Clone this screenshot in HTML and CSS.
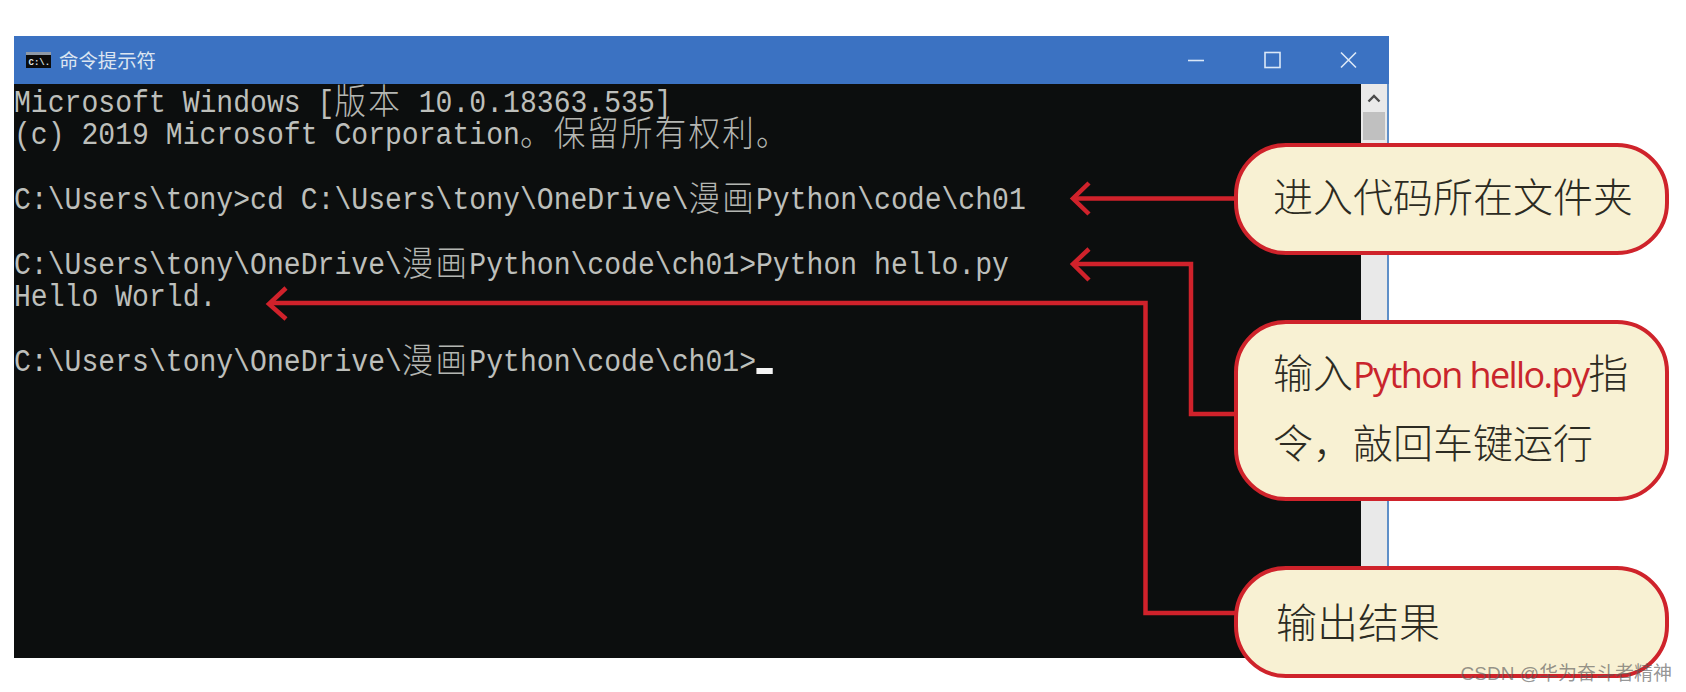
FILE: index.html
```html
<!DOCTYPE html>
<html lang="zh-CN">
<head>
<meta charset="utf-8">
<title>命令提示符</title>
<link rel="stylesheet" href="styles.css">
</head>
<body>
<div class="stage">
  <div class="window">
    <header class="titlebar">
      <svg class="app-icon" width="25" height="16" viewBox="0 0 25 16">
        <rect width="25" height="16" fill="#0b0b0b"/>
        <rect x="0" y="0" width="25" height="3" fill="#8f99a6"/>
        <text x="2.5" y="13" class="app-icon-text">C:\.</text>
      </svg>
      <span class="title">命令提示符</span>
      <div class="controls">
        <svg class="ctl" width="18" height="18" viewBox="0 0 18 18"><path d="M1 9.500H17" /></svg>
        <svg class="ctl" width="18" height="18" viewBox="0 0 18 18"><rect x="2" y="1.500" width="15" height="15"/></svg>
        <svg class="ctl" width="18" height="18" viewBox="0 0 18 18"><path d="M2 1.500L17 16.500M17 1.500L2 16.500"/></svg>
      </div>
    </header>
    <div class="content">
      <div class="console">
        <div class="line">Microsoft Windows [<span class="cjk">版本</span> 10.0.18363.535]</div>
        <div class="line">(c) 2019 Microsoft Corporation<span class="cjk">。保留所有权利。</span></div>
        <div class="line">&nbsp;</div>
        <div class="line">C:\Users\tony&gt;cd C:\Users\tony\OneDrive\<span class="cjk">漫画</span>Python\code\ch01</div>
        <div class="line">&nbsp;</div>
        <div class="line">C:\Users\tony\OneDrive\<span class="cjk">漫画</span>Python\code\ch01&gt;Python hello.py</div>
        <div class="line">Hello World.</div>
        <div class="line">&nbsp;</div>
        <div class="line">C:\Users\tony\OneDrive\<span class="cjk">漫画</span>Python\code\ch01&gt;<span class="cursor"></span></div>
      </div>
      <aside class="scrollbar">
        <div class="scroll-up">
          <svg width="14" height="9" viewBox="0 0 14 9"><path d="M1.500 7.500L7 2L12.500 7.500"/></svg>
        </div>
        <div class="scroll-thumb"></div>
      </aside>
    </div>
  </div>

  <svg class="arrows" width="1686" height="692" viewBox="0 0 1686 692">
    <path d="M1240 198.500H1074"/>
    <path d="M1089 183L1073 198.500L1089 214"/>
    <path d="M1240 414H1191V264H1074"/>
    <path d="M1089 249L1073 264L1089 280"/>
    <path d="M1240 613H1145.500V303H270"/>
    <path d="M286 288L269 304L286 319"/>
  </svg>

  <div class="callout callout-one"><p>进入代码所在文件夹</p></div>
  <div class="callout callout-two"><p>输入<span class="cmd">Python hello.py</span>指令，敲回车键运行</p></div>
  <div class="callout callout-three"><p>输出结果</p></div>
  <div class="watermark">CSDN @华为奋斗者精神</div>
</div>
</body>
</html>
```
FILE: styles.css
```css
html, body {
  margin: 0;
  padding: 0;
  background: #fff;
  overflow: hidden;
}

.stage {
  position: relative;
  box-sizing: border-box;
  width: 1686px;
  height: 692px;
  padding: 36px 0 0 14px;
  font-family: "Noto Sans CJK SC", sans-serif;
}

.window {
  display: flex;
  flex-direction: column;
  width: 1375px;
  height: 622px;
}

.titlebar {
  display: flex;
  align-items: center;
  flex: 0 0 48px;
  padding-left: 12px;
  background: #3b72c2;
}

.app-icon { flex: none; }

.app-icon-text {
  font-family: "Liberation Mono", monospace;
  font-size: 9px;
  font-weight: 700;
  fill: #dfe3e6;
}

.title {
  margin-left: 8px;
  font-size: 19.400px;
  color: #dbe5f1;
  line-height: 1;
}

.controls {
  display: flex;
  gap: 58px;
  margin-left: auto;
  margin-right: 32px;
}

.ctl {
  fill: none;
  stroke: #dbe8f7;
  stroke-width: 1.600;
}

.content {
  display: flex;
  flex: 1;
  min-height: 0;
}

.console {
  flex: 1;
  padding-top: 4px;
  overflow: hidden;
  background: #0c0e0e;
  color: #bdbfbb;
  font-family: "Liberation Mono", monospace;
  font-size: 31px;
}

.line {
  height: 32.400px;
  line-height: 32.400px;
  white-space: pre;
  transform: scaleX(0.9065);
  transform-origin: left center;
}

.cjk {
  font-family: "Noto Sans CJK SC", sans-serif;
  font-size: 34.800px;
  letter-spacing: 2.400px;
  font-weight: 300;
  color: #b4b6b2;
  line-height: 0;
  vertical-align: -2px;
}

.cursor {
  display: inline-block;
  width: 18.600px;
  height: 6px;
  background: #f4f4f4;
  vertical-align: -3px;
}

.scrollbar {
  flex: 0 0 26px;
  background: #e9e9e9;
  border-right: 2px solid #5f8fc8;
}

.scroll-up {
  display: flex;
  align-items: center;
  justify-content: center;
  height: 28px;
}

.scroll-up svg {
  fill: none;
  stroke: #4a4a4a;
  stroke-width: 2.400;
}

.scroll-thumb {
  height: 28px;
  margin: 0 2px;
  background: #c0c0c0;
}

.arrows {
  position: absolute;
  left: 0;
  top: 0;
  fill: none;
  stroke: #d0222b;
  stroke-width: 4.500;
}

.callout {
  position: absolute;
  left: 1234px;
  width: 435px;
  box-sizing: border-box;
  display: flex;
  align-items: center;
  padding-left: 35px;
  padding-right: 16px;
  background: #f8f1d3;
  border: 4.500px solid #cf232b;
  border-radius: 52px;
  color: #2c2b22;
  font-size: 40px;
  font-weight: 300;
}

.callout p { margin: 0; }

.callout-one {
  top: 143px;
  height: 112px;
  padding-bottom: 8px;
}

.callout-two {
  top: 320px;
  height: 181px;
  line-height: 67px;
  padding-bottom: 8px;
}

.callout-three {
  top: 566px;
  height: 112px;
  padding-left: 38px;
  padding-bottom: 5px;
  font-size: 41px;
}

.cmd {
  font-family: "Open Sans", sans-serif;
  font-size: 36px;
  font-weight: 400;
  letter-spacing: -1.600px;
  color: #c9252c;
}

.watermark {
  position: absolute;
  right: 14px;
  top: 662px;
  font-family: "Liberation Sans", "Noto Sans CJK SC", sans-serif;
  font-size: 19px;
  line-height: 24px;
  color: rgba(90, 90, 90, 0.65);
  white-space: nowrap;
}
```
